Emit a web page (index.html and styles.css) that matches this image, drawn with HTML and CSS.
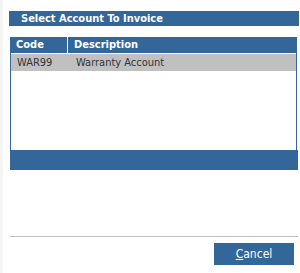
FILE: index.html
```html
<!DOCTYPE html>
<html lang="en">
<head>
    <meta charset="UTF-8">
    <title>Select Account To Invoice</title>
    <link rel="stylesheet" href="styles.css">
</head>
<body>
    <div class="dialog">
        <div class="dialog-title">Select Account To Invoice</div>

        <div class="grid">
            <div class="grid-header">
                <div class="col col-code">Code</div>
                <div class="col col-desc">Description</div>
            </div>
            <div class="grid-body">
                <div class="grid-row selected">
                    <div class="col col-code">WAR99</div>
                    <div class="col col-desc">Warranty Account</div>
                </div>
            </div>
            <div class="grid-footer"></div>
        </div>

        <div class="dialog-footer">
            <button class="btn"><u>C</u>ancel</button>
        </div>
    </div>
</body>
</html>
```

FILE: styles.css
```css
* {
    box-sizing: border-box;
    margin: 0;
    padding: 0;
}

body {
    background-color: #fff;
    font-family: "DejaVu Sans Condensed", "DejaVu Sans", sans-serif;
    font-size: 11px;
    color: #333;
    width: 300px;
    height: 273px;
    border-left: 3px solid #f4f4f4;
}

.dialog {
    padding: 11px 1px 0 6px;
}

.dialog-title {
    background-color: #336699;
    color: #fff;
    font-weight: bold;
    height: 15px;
    line-height: 15px;
    padding-left: 12px;
}

.grid {
    margin: 11px 2px 0 1px;
    display: flex;
    flex-direction: column;
}

.grid-header {
    display: flex;
    background-color: #336699;
    color: #fff;
    font-weight: bold;
    height: 16px;
    line-height: 16px;
}

.grid-header .col-code {
    border-right: 1px solid #fff;
}

.col {
    padding-left: 6px;
}

.col-code {
    width: 58px;
}

.grid-body {
    height: 97px;
    border-left: 1px solid #336699;
    border-right: 1px solid #336699;
    padding-top: 1px;
}

.grid-row {
    display: flex;
    height: 17px;
    line-height: 17px;
}

.grid-row .col-code {
    padding-left: 6px;
}

.grid-row .col-desc {
    padding-left: 7px;
}

.grid-row.selected {
    background-color: #c0c0c0;
}

.grid-footer {
    background-color: #336699;
    height: 20px;
    margin-right: -1px;
}

.dialog-footer {
    margin: 66px 1px 0 1px;
    border-top: 1px solid #c0c0c0;
    display: flex;
    justify-content: flex-end;
    padding: 6px 4px 0 0;
}

.btn {
    background-color: #336699;
    color: #fff;
    border: none;
    width: 80px;
    height: 22px;
    font-family: "DejaVu Sans Condensed", "DejaVu Sans", sans-serif;
    font-size: 12px;
}
```
